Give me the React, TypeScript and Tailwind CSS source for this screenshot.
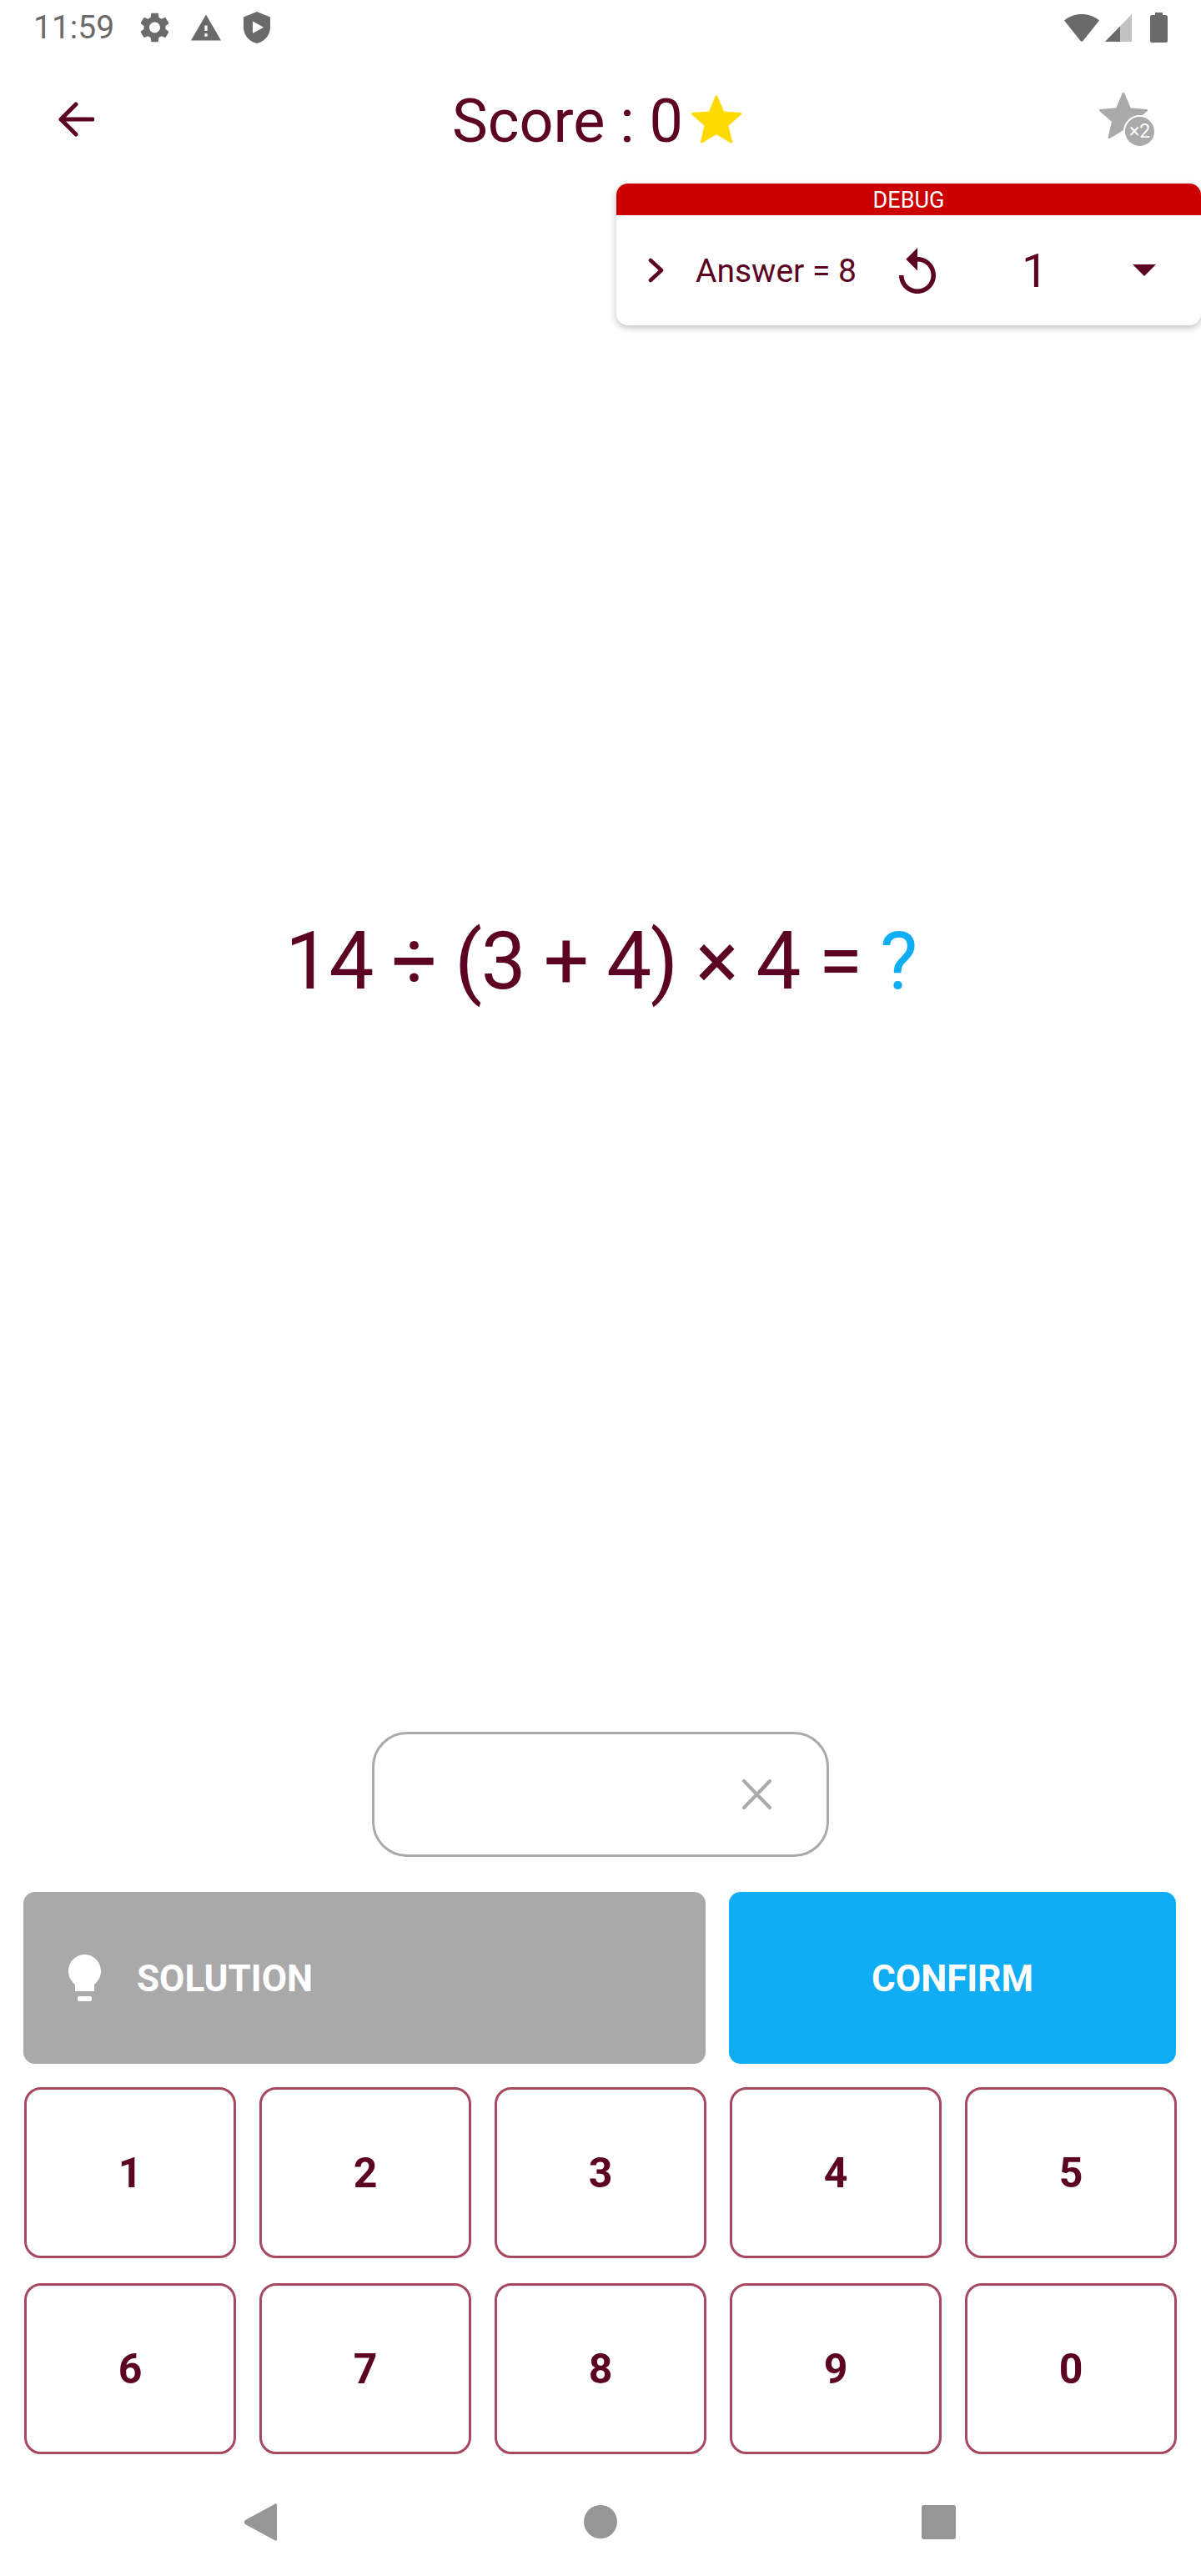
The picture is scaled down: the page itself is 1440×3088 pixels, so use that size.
const keyRows = [
  ["1", "2", "3", "4", "5"],
  ["6", "7", "8", "9", "0"],
];

const starPath =
  "M12 17.27L18.18 21l-1.64-6.97L22 9.24l-7.19-.61L12 2 9.19 8.63 2 9.24l5.46 4.79L5.82 21z";

function StatusBar() {
  return (
    <div className="flex h-[66px] items-center pl-[40px] pr-[40px] text-[#6a6a6a]">
      <span className="text-[39px] leading-none">11:59</span>
      {/* Notification icons */}
      <svg className="ml-[31px] h-[36px] w-[35px] fill-current" viewBox="2.6 2 18.8 20">
        <path d="M19.14 12.94c.04-.3.06-.61.06-.94 0-.32-.02-.64-.07-.94l2.03-1.58c.18-.14.23-.41.12-.61l-1.92-3.32c-.12-.22-.37-.29-.59-.22l-2.39.96c-.5-.38-1.03-.7-1.62-.94l-.36-2.54c-.04-.24-.24-.41-.48-.41h-3.84c-.24 0-.43.17-.47.41l-.36 2.54c-.59.24-1.13.57-1.62.94l-2.39-.96c-.22-.08-.47 0-.59.22L2.74 8.87c-.12.21-.08.47.12.61l2.03 1.58c-.05.3-.09.63-.09.94s.02.64.07.94l-2.03 1.58c-.18.14-.23.41-.12.61l1.92 3.32c.12.22.37.29.59.22l2.39-.96c.5.38 1.03.7 1.62.94l.36 2.54c.05.24.24.41.48.41h3.84c.24 0 .44-.17.47-.41l.36-2.54c.59-.24 1.13-.56 1.62-.94l2.39.96c.22.08.47 0 .59-.22l1.92-3.32c.12-.22.07-.47-.12-.61l-2.01-1.58zM12 15.6c-1.98 0-3.6-1.62-3.6-3.6s1.62-3.6 3.6-3.6 3.6 1.62 3.6 3.6-1.62 3.6-3.6 3.6z" />
      </svg>
      <svg className="ml-[26px] h-[34px] w-[36px] fill-current" viewBox="1 2 22 19">
        <path d="M1 21h22L12 2 1 21zm12-3h-2v-2h2v2zm0-4h-2v-4h2v4z" />
      </svg>
      <svg className="ml-[27px] h-[38px] w-[32px] fill-current" viewBox="0 0 32 38">
        <path
          fillRule="evenodd"
          d="M16 0L32 6.5V19C32 28 25 36 16 38C7 36 0 28 0 19V6.5L16 0ZM11 11.5V26L24 18.7L11 11.5Z"
        />
      </svg>
      {/* System icons */}
      <svg className="ml-auto h-[33px] w-[42px] fill-current" viewBox="0 0 42 33">
        <path d="M21 0C29 0 36 2.600 42 7.500L22.500 32C21.700 33 20.300 33 19.500 32L0 7.500C6 2.600 13 0 21 0Z" />
      </svg>
      <svg className="ml-[7px] h-[33px] w-[32px]" viewBox="0 0 32 33">
        <path d="M32 0V33H0Z" fill="#c2c2c2" />
        <path d="M18 14.500V33H0Z" fill="#6a6a6a" />
      </svg>
      <svg className="ml-[22px] h-[36px] w-[21px] fill-current" viewBox="0 0 21 36">
        <path d="M6 0H15V3H19C20 3 21 4 21 5V34C21 35 20 36 19 36H2C1 36 0 35 0 34V5C0 4 1 3 2 3H6Z" />
      </svg>
    </div>
  );
}

function Toolbar() {
  return (
    <div className="flex h-[154px] items-center pl-[70px] pr-[54px] text-[#5c0324]">
      <svg className="h-[42px] w-[43px]" viewBox="0 0 43 42" fill="none" stroke="currentColor" strokeWidth="5" strokeLinecap="round" strokeLinejoin="round">
        <path d="M41 21H3M21 3L3 21L21 39" />
      </svg>
      <div className="ml-[429px] flex items-center">
        <span className="mt-[6px] text-[72px] leading-none">Score : 0</span>
        <svg className="ml-[10px] h-[58px] w-[60px] fill-[#ffd900] stroke-[#ffd900]" viewBox="1.500 1.500 21 20">
          <path d={starPath} strokeWidth="1" strokeLinejoin="round" />
        </svg>
      </div>
      <div className="relative ml-auto h-[66px] w-[68px]">
        <svg className="absolute left-0 top-0 h-[57px] w-[58px] fill-[#aaaaaa] stroke-[#aaaaaa]" viewBox="1.500 1.500 21 20">
          <path d={starPath} strokeWidth="1" strokeLinejoin="round" />
        </svg>
        <span className="absolute left-[29px] top-[28px] flex h-[39px] w-[39px] items-center justify-center rounded-full border-2 border-white bg-[#aaaaaa] text-[23px] leading-none text-white">
          ×2
        </span>
      </div>
    </div>
  );
}

function DebugCard() {
  return (
    <div className="absolute left-[739px] top-[220px] h-[170px] w-[701px] rounded-[14px] bg-white text-[#5c0324] shadow-[0_3px_8px_rgba(0,0,0,0.25)]">
      <div className="flex h-[38px] items-center justify-center rounded-t-[14px] bg-[#cc0000] pt-[2px] text-[27px] leading-none text-white">
        DEBUG
      </div>
      <div className="flex h-[132px] items-center pl-[38px]">
        <svg className="h-[30px] w-[19px]" viewBox="0 0 19 30" fill="none" stroke="currentColor" strokeWidth="4.500" strokeLinecap="round" strokeLinejoin="round">
          <path d="M3 3L16 15L3 27" />
        </svg>
        <span className="ml-[38px] mt-[2px] text-[39px] leading-none">Answer = 8</span>
        <svg className="ml-[51px] h-[55px] w-[44px] fill-current" viewBox="4 1 16 20">
          <path d="M12 5V1L7 6l5 5V7c3.310 0 6 2.690 6 6s-2.690 6-6 6-6-2.690-6-6H4c0 4.420 3.580 8 8 8s8-3.580 8-8-3.580-8-8-8z" />
        </svg>
        <span className="ml-[103px] mt-[2px] text-[56px] leading-none">1</span>
        <svg className="ml-[102px] h-[14px] w-[28px] fill-current" viewBox="0 0 28 14">
          <path d="M0 0H28L14 14Z" />
        </svg>
      </div>
    </div>
  );
}

function NavBar() {
  return (
    <div className="mt-[16px] flex h-[130px] items-center pl-[293px] text-[#969696]">
      <svg className="h-[45px] w-[39px] fill-current" viewBox="0 0 39 45">
        <path d="M37 0.500C38 0 39 0.800 39 2V43C39 44.200 38 45 37 44.500L1 25C-0.300 24 -0.300 21 1 20Z" />
      </svg>
      <div className="ml-[368px] h-[40px] w-[40px] rounded-full bg-current" />
      <div className="ml-[365px] h-[41px] w-[41px] rounded-[3px] bg-current" />
    </div>
  );
}

export default function App() {
  return (
    <div className="relative flex h-[3088px] w-[1440px] flex-col bg-white font-[Roboto,sans-serif]">
      <StatusBar />
      <Toolbar />
      <DebugCard />

      {/* Question */}
      <div className="flex flex-1 items-center justify-center pl-[1px] pt-[8px] text-[96px] leading-none tracking-[-1.4px] text-[#5c0324]">
        <span>
          14 ÷ (3 + 4) × 4 = <span className="text-[#10adf4]">?</span>
        </span>
      </div>

      {/* Answer field */}
      <div className="ml-[446px] flex h-[150px] w-[548px] items-center justify-end rounded-[42px] border-[3px] border-[#aaaaaa] pr-[65px]">
        <svg className="h-[36px] w-[37px]" viewBox="0 0 37 36" fill="none" stroke="#aaaaaa" strokeWidth="4" strokeLinecap="round">
          <path d="M3 2L34 34M34 2L3 34" />
        </svg>
      </div>

      {/* Actions */}
      <div className="mt-[42px] flex h-[206px] gap-[28px] pl-[28px] pr-[30px]">
        <button className="flex w-[818px] items-center rounded-[14px] bg-[#a9a9a9] pl-[54px] text-white">
          <svg className="h-[56px] w-[39px] fill-current" viewBox="0 0 39 56">
            <path d="M19.500 0C30.300 0 39 9 39 20C39 27 35.500 32 31 36V44H8V36C3.500 32 0 27 0 20C0 9 8.700 0 19.500 0Z" />
            <rect x="11" y="50" width="17" height="6" rx="2" />
          </svg>
          <span className="ml-[43px] mt-[2px] text-[44px] font-bold leading-none">SOLUTION</span>
        </button>
        <button className="flex flex-1 items-center justify-center rounded-[14px] bg-[#10adf4] pt-[2px] text-[44px] font-bold leading-none text-white">
          CONFIRM
        </button>
      </div>

      {/* Keypad */}
      <div className="mt-[28px] grid grid-cols-5 gap-x-[28px] gap-y-[30px] px-[29px]">
        {keyRows.flat().map((key) => (
          <button
            key={key}
            className="flex h-[205px] items-center justify-center rounded-[20px] border-[3px] border-[#a6495f] text-[50px] font-bold leading-none text-[#5c0324]"
          >
            {key}
          </button>
        ))}
      </div>

      <NavBar />
    </div>
  );
}
